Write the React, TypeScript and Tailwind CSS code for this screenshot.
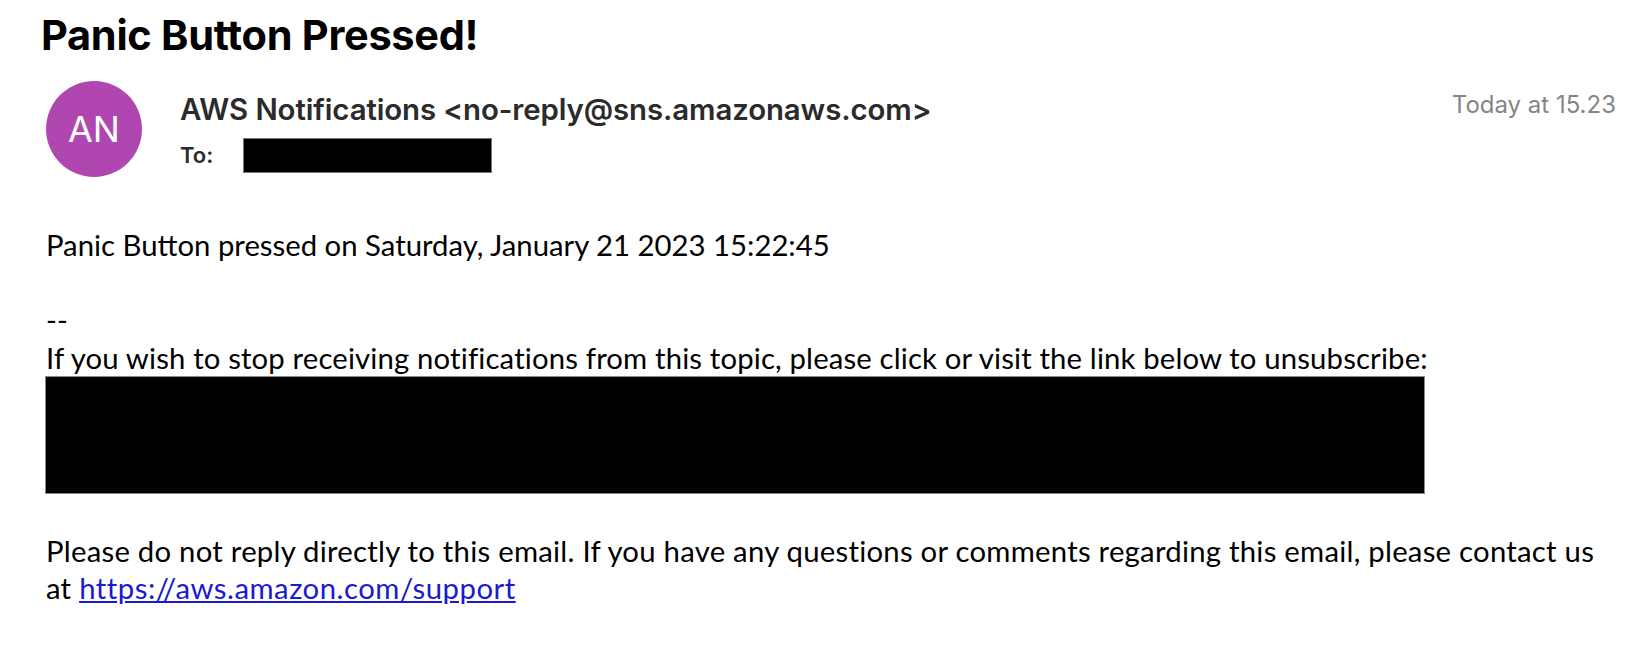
export default function App() {
  return (
    <div className="w-[1632px] h-[660px] overflow-hidden bg-white">
      {/* subject */}
      <h1 className="pl-[41px] pt-[11px] text-[41.5px] leading-[48px] font-bold text-black font-['Inter',sans-serif] tracking-[-0.3px]">
        Panic Button Pressed!
      </h1>

      {/* header */}
      <div className="flex items-start pl-[46px] pr-[16px] mt-[22px]">
        <div className="w-[96px] h-[96px] rounded-full bg-[#b047b0] flex items-center justify-center shrink-0">
          <span className="text-white text-[36px] leading-none font-['Inter',sans-serif] font-normal">AN</span>
        </div>
        <div className="ml-[38px] flex-1 font-['Inter',sans-serif]">
          <div className="flex items-start justify-between">
            <div className="pt-[12px] text-[29.4px] leading-[34px] font-semibold text-[#2b2b2b] tracking-[-0.1px]">
              AWS Notifications &lt;no-reply@sns.amazonaws.com&gt;
            </div>
            <div className="pt-[10px] text-[24px] leading-[28px] text-[#858585]">Today at 15.23</div>
          </div>
          <div className="flex items-center mt-[11px]">
            <span className="text-[22px] font-semibold text-[#2b2b2b] w-[63px]">To:</span>
            <div className="w-[249px] h-[35px] bg-black border border-[#777]" />
          </div>
        </div>
      </div>

      {/* body */}
      <div className="pl-[46px] pr-[20px] mt-[49px] text-[29.3px] leading-[37.5px] text-black font-['Lato',sans-serif]">
        <p>Panic Button pressed on Saturday, January 21 2023 15:22:45</p>
        <p>&nbsp;</p>
        <p>--</p>
        <p className="tracking-[0.15px]">If you wish to stop receiving notifications from this topic, please click or visit the link below to unsubscribe:</p>
        <div className="w-[1380px] h-[118px] -ml-[1px] bg-black border border-[#888]" />
        <p>&nbsp;</p>
        <p className="tracking-[0.25px]">
          Please do not reply directly to this email. If you have any questions or comments regarding this email, please contact us
          <br />
          at <a href="#" className="text-[#1a1ad0] underline tracking-[0.5px]">https://aws.amazon.com/support</a>
        </p>
      </div>
    </div>
  );
}
